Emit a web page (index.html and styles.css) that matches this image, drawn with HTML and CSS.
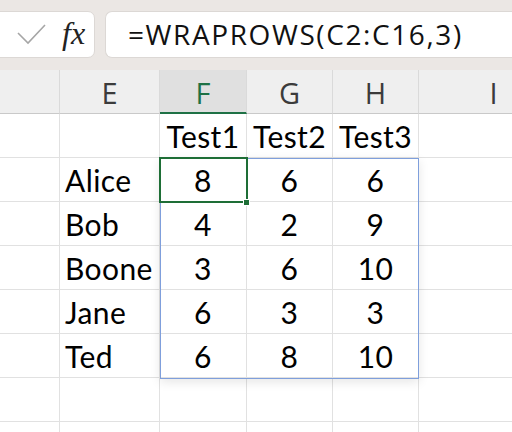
FILE: index.html
```html
<!DOCTYPE html>
<html>
<head>
<meta charset="utf-8">
<link rel="stylesheet" href="styles.css">
</head>
<body>
<div class="toolbar">
  <div class="namebox">
    <svg class="check" width="30" height="22" viewBox="0 0 30 22"><polyline points="1,9 11,19 28,1" fill="none" stroke="#a6a6a6" stroke-width="1.6"/></svg>
    <span class="fx">fx</span>
  </div>
  <div class="formula">=WRAPROWS(C2:C16,3)</div>
</div>
<div class="sheet">
  <div class="grid">
    <div class="hd"></div><div class="hd">E</div><div class="hd active">F</div><div class="hd">G</div><div class="hd">H</div><div class="hd">I</div>

    <div class="c"></div><div class="c"></div><div class="c n">Test1</div><div class="c n">Test2</div><div class="c n">Test3</div><div class="c"></div>
    <div class="c"></div><div class="c t">Alice</div><div class="c n">8</div><div class="c n">6</div><div class="c n">6</div><div class="c"></div>
    <div class="c"></div><div class="c t">Bob</div><div class="c n">4</div><div class="c n">2</div><div class="c n">9</div><div class="c"></div>
    <div class="c"></div><div class="c t">Boone</div><div class="c n">3</div><div class="c n">6</div><div class="c n">10</div><div class="c"></div>
    <div class="c"></div><div class="c t">Jane</div><div class="c n">6</div><div class="c n">3</div><div class="c n">3</div><div class="c"></div>
    <div class="c"></div><div class="c t">Ted</div><div class="c n">6</div><div class="c n">8</div><div class="c n">10</div><div class="c"></div>
    <div class="c"></div><div class="c"></div><div class="c"></div><div class="c"></div><div class="c"></div><div class="c"></div>
    <div class="c"></div><div class="c"></div><div class="c"></div><div class="c"></div><div class="c"></div><div class="c"></div>
  </div>
  <div class="spill"></div>
  <div class="selected"></div>
  <div class="handle"></div>
</div>
</body>
</html>
```
FILE: styles.css
```css
html, body {
  margin: 0;
  padding: 0;
  width: 512px;
  height: 432px;
  overflow: hidden;
  background: #ffffff;
  font-family: Lato, "Open Sans", sans-serif;
}

.toolbar {
  height: 70px;
  background: #ebe7e4;
  display: flex;
  align-items: flex-start;
  padding-top: 11px;
  box-sizing: border-box;
  gap: 10px;
  overflow: hidden;
}

.namebox {
  flex: none;
  margin-left: -10px;
  width: 105px;
  height: 47px;
  background: #ffffff;
  border: 1px solid #dcd8d5;
  border-radius: 7px;
  box-sizing: border-box;
  display: flex;
  align-items: center;
  padding-left: 26px;
  gap: 15px;
}

.check {
  display: block;
  margin-top: 1px;
}

.fx {
  font-family: "Liberation Serif", "DejaVu Serif", serif;
  font-style: italic;
  font-size: 32px;
  color: #222;
  margin-top: -3px;
}

.formula {
  flex: 1;
  height: 47px;
  background: #ffffff;
  border: 1px solid #dcd8d5;
  border-right: none;
  border-radius: 7px 0 0 7px;
  box-sizing: border-box;
  padding-left: 22px;
  font-family: "Open Sans", "Noto Sans", sans-serif;
  font-size: 28px;
  letter-spacing: 1.6px;
  line-height: 45px;
  color: #111;
  white-space: nowrap;
  overflow: hidden;
}

.sheet {
  position: relative;
  width: 512px;
  height: 362px;
  overflow: hidden;
}

.grid {
  display: grid;
  grid-template-columns: 60px 100px 87px 86px 86px 150px;
  grid-auto-rows: 44px;
}

.hd {
  background: #efefef;
  border-right: 1px solid #dadada;
  border-bottom: 1px solid #c9c9c9;
  box-sizing: border-box;
  text-align: center;
  font-family: "Open Sans", Lato, sans-serif;
  font-size: 29px;
  line-height: 44px;
  color: #3b3b3b;
  padding-top: 1px;
}

.hd.active {
  background: #e0e0e0;
  color: #1e7145;
  border-bottom: 2px solid #1e7145;
}

.c {
  border-right: 1px solid #e1e1e1;
  border-bottom: 1px solid #e1e1e1;
  box-sizing: border-box;
  font-size: 30px;
  letter-spacing: 0.4px;
  line-height: 44px;
  color: #000;
  white-space: nowrap;
}

.c.n {
  text-align: center;
}

.c.t {
  padding-left: 5px;
}

.spill {
  position: absolute;
  left: 160px;
  top: 88px;
  width: 259px;
  height: 221px;
  border: 1px solid #7f9fdc;
  box-sizing: border-box;
  box-shadow: 0 3px 10px rgba(0, 0, 0, 0.10);
  pointer-events: none;
}

.selected {
  position: absolute;
  left: 159px;
  top: 87px;
  width: 89px;
  height: 46px;
  border: 2px solid #1e6e36;
  box-sizing: border-box;
}

.handle {
  position: absolute;
  left: 243px;
  top: 129px;
  width: 7px;
  height: 7px;
  background: #1e6e36;
  border: 1px solid #ffffff;
  box-sizing: border-box;
}
```
